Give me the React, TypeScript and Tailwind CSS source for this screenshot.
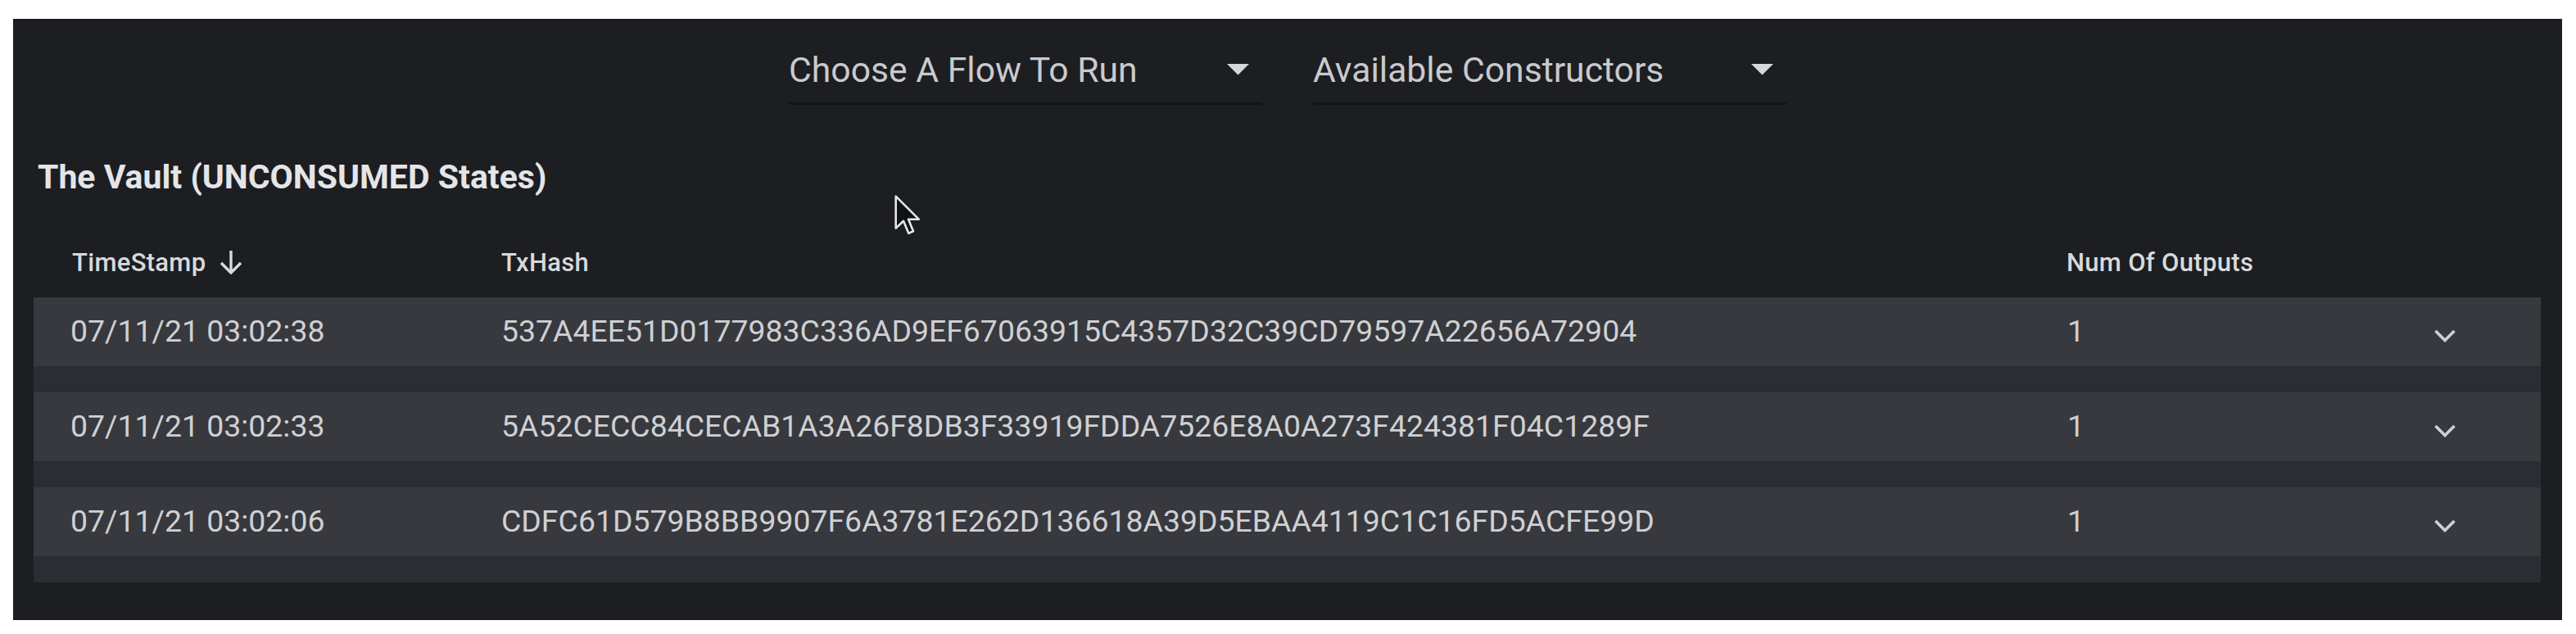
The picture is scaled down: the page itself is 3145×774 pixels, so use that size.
import React from "react";

const rows = [
  { ts: "07/11/21 03:02:38", hash: "537A4EE51D0177983C336AD9EF67063915C4357D32C39CD79597A22656A72904", n: "1" },
  { ts: "07/11/21 03:02:33", hash: "5A52CECC84CECAB1A3A26F8DB3F33919FDDA7526E8A0A273F424381F04C1289F", n: "1" },
  { ts: "07/11/21 03:02:06", hash: "CDFC61D579B8BB9907F6A3781E262D136618A39D5EBAA4119C1C16FD5ACFE99D", n: "1" },
];

function Select({ label }: { label: string }) {
  return (
    <div className="w-[578px] flex flex-col">
      <div className="h-[48px] flex items-center justify-between">
        <span className="text-[42.7px] leading-none text-[#c9cacd]">{label}</span>
        <svg width="27" height="14" viewBox="0 0 27 14" className="mr-[16px]">
          <path d="M0 0 L27 0 L13.5 13.5 Z" fill="#d6d7da" />
        </svg>
      </div>
      <div className="mt-[16px] h-[3px] bg-[#121417]" />
    </div>
  );
}

export default function App() {
  return (
    <div className="w-[3145px] h-[774px] bg-white pt-[23px] pl-[16px] pr-[17px] font-['Roboto',sans-serif]">
      <div className="relative h-[734px] bg-[#1c1e22] flex flex-col">
        <div className="flex justify-center gap-[62px] pt-[38px]">
          <Select label="Choose A Flow To Run" />
          <Select label="Available Constructors" />
        </div>

        <div className="mt-[68px] pl-[30px] h-[40px] text-[41px] leading-none font-bold text-[#e4e5e7]">
          The Vault (UNCONSUMED States)
        </div>

        <div className="ml-[25px] mr-[26px]">
          <div className="mt-[69px] h-[30px] flex items-center pl-[47px] text-[31px] tracking-[0.01em] leading-none font-medium text-[#d8d9dc]">
            <div className="w-[524px] flex items-center gap-[16px]">
              <span>TimeStamp</span>
              <svg width="30" height="30" viewBox="0 0 30 30" fill="none" stroke="#d8d9dc" strokeWidth="3.4">
                <path d="M15 1 V28" />
                <path d="M3 16 L15 28 L27 16" />
              </svg>
            </div>
            <div className="w-[1911px]">TxHash</div>
            <div className="flex-1">Num Of Outputs</div>
          </div>

          <div className="mt-[28px] flex flex-col">
            {rows.map((r) => (
              <div key={r.hash} className="flex flex-col">
                <div className="h-[84px] bg-[#37393e] flex items-center pl-[45px] text-[37.4px] leading-none text-[#cfd0d3]">
                  <div className="w-[526px]">{r.ts}</div>
                  <div className="w-[1910px]">{r.hash}</div>
                  <div className="flex-1 pl-[2px]">{r.n}</div>
                  <div className="w-[48px] mr-[93px] flex justify-center pt-[10px]">
                    <svg width="26" height="16" viewBox="0 0 26 16" fill="none" stroke="#cfd0d3" strokeWidth="3.6">
                      <path d="M1.5 2 L13 13.5 L24.5 2" />
                    </svg>
                  </div>
                </div>
                <div className="h-[32px] bg-[#2b2d32]" />
              </div>
            ))}
          </div>
        </div>

        <svg
          className="absolute left-[1075px] top-[214px]"
          width="34"
          height="52"
          viewBox="0 0 13 20"
        >
          <path
            d="M1 1 L1 16 L4.6 12.6 L7 18.4 L9.2 17.4 L6.9 11.8 L11.8 11.8 Z"
            fill="#111214"
            stroke="#e6e7e9"
            strokeWidth="1"
            strokeLinejoin="round"
          />
        </svg>
      </div>
    </div>
  );
}
